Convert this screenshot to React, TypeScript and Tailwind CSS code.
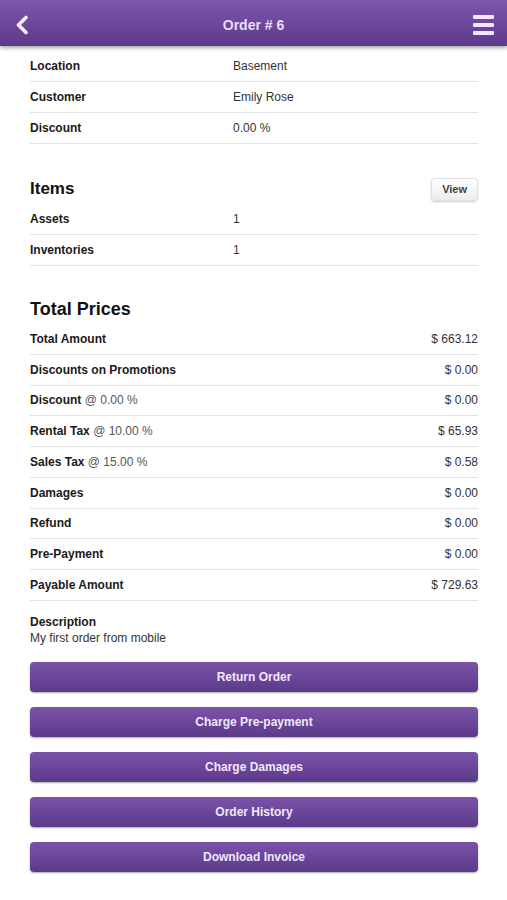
import React from 'react'

const details = [
  { label: 'Location', value: 'Basement' },
  { label: 'Customer', value: 'Emily Rose' },
  { label: 'Discount', value: '0.00 %' },
]

const items = [
  { label: 'Assets', value: '1' },
  { label: 'Inventories', value: '1' },
]

const prices = [
  { label: 'Total Amount', value: '$ 663.12' },
  { label: 'Discounts on Promotions', value: '$ 0.00' },
  { label: 'Discount', rate: '@ 0.00 %', value: '$ 0.00' },
  { label: 'Rental Tax', rate: '@ 10.00 %', value: '$ 65.93' },
  { label: 'Sales Tax', rate: '@ 15.00 %', value: '$ 0.58' },
  { label: 'Damages', value: '$ 0.00' },
  { label: 'Refund', value: '$ 0.00' },
  { label: 'Pre-Payment', value: '$ 0.00' },
  { label: 'Payable Amount', value: '$ 729.63' },
]

const actions = ['Return Order', 'Charge Pre-payment', 'Charge Damages', 'Order History', 'Download Invoice']

function DetailRow({ label, value }: { label: string; value: string }) {
  return (
    <div className="flex items-center h-[31px] border-b border-[#e3e3e3] text-[12px]">
      <span className="w-[203px] font-bold text-[#1a1a1a]">{label}</span>
      <span className="text-[#333]">{value}</span>
    </div>
  )
}

export default function App() {
  return (
    <div className="min-h-[900px] bg-white font-['Liberation_Sans',Arial,sans-serif]">
      {/* Header */}
      <header className="relative flex items-center justify-between h-[46px] pt-[4px] px-[14px] bg-gradient-to-b from-[#7d56ac] to-[#5d3a8b] shadow-[0_2px_4px_rgba(0,0,0,0.35)]">
        <svg width="14" height="20" viewBox="0 0 14 20" className="ml-[1px]">
          <path d="M11 2.5 L3.5 10 L11 17.5" fill="none" stroke="#f3ecfb" strokeWidth="3.6" strokeLinecap="round" strokeLinejoin="round" />
        </svg>
        <h1 className="absolute left-0 right-0 top-[4px] bottom-0 flex items-center justify-center text-[14px] font-bold text-[#e9def6] pointer-events-none">Order # 6</h1>
        <div className="flex flex-col gap-[4px] mr-[-1px]">
          <span className="block w-[21px] h-[4px] rounded-[1px] bg-[#f1e6fb]" />
          <span className="block w-[21px] h-[4px] rounded-[1px] bg-[#f1e6fb]" />
          <span className="block w-[21px] h-[4px] rounded-[1px] bg-[#f1e6fb]" />
        </div>
      </header>

      <main className="pl-[30px] pr-[29px] pt-[5px] pb-8">
        {details.map((d) => (
          <DetailRow key={d.label} {...d} />
        ))}

        <div className="flex items-center justify-between mt-[33px] mb-[3px] h-[24px]">
          <h2 className="text-[17px] font-bold text-[#111]">Items</h2>
          <button className="h-[23px] px-[10px] rounded-[4px] border border-[#e0e0e0] bg-gradient-to-b from-white to-[#ececec] shadow-[0_1px_2px_rgba(0,0,0,0.2)] text-[11px] font-bold text-[#444]">
            View
          </button>
        </div>
        {items.map((d) => (
          <DetailRow key={d.label} {...d} />
        ))}

        <h2 className="mt-[32px] mb-[4px] h-[22px] leading-[22px] text-[18px] font-bold text-[#111]">Total Prices</h2>
        {prices.map((p) => (
          <div key={p.label} className="flex items-center justify-between h-[30.75px] border-b border-[#e3e3e3] text-[12px]">
            <span>
              <span className="font-bold text-[#1a1a1a]">{p.label}</span>
              {p.rate && <span className="text-[#555]"> {p.rate}</span>}
            </span>
            <span className="text-[#333]">{p.value}</span>
          </div>
        ))}

        <div className="mt-[13px] text-[12px] leading-[16px]">
          <p className="font-bold text-[#1a1a1a]">Description</p>
          <p className="text-[#333]">My first order from mobile</p>
        </div>

        <div className="mt-[16px] flex flex-col gap-[15px]">
          {actions.map((a) => (
            <button
              key={a}
              className="h-[30px] w-full rounded-[4px] bg-gradient-to-b from-[#7a53a9] to-[#5c3a8a] shadow-[0_1px_2px_rgba(0,0,0,0.35)] text-[12px] font-bold text-[#f0e7f9]"
            >
              {a}
            </button>
          ))}
        </div>
      </main>
    </div>
  )
}
